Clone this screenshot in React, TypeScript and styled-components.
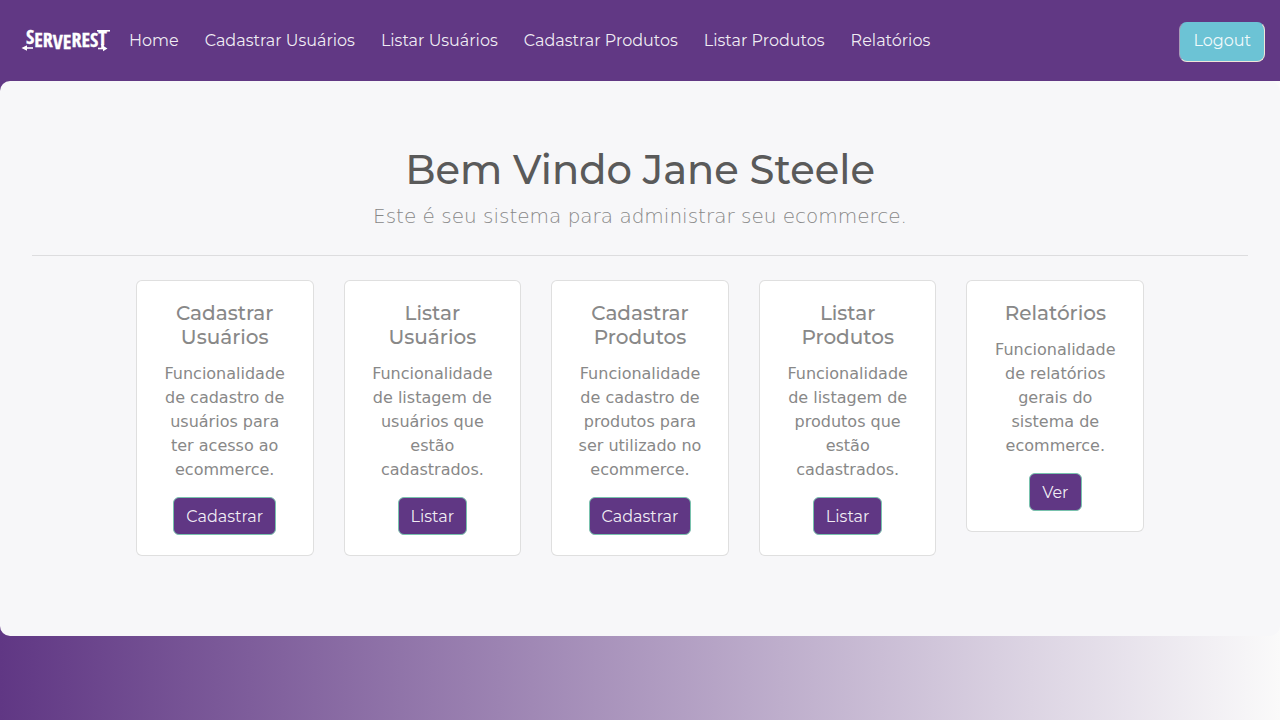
import React from "react";
import styled, { createGlobalStyle } from "styled-components";

const heading = `"Montserrat", "Open Sans", sans-serif`;
const body = `"DejaVu Sans", sans-serif`;

const GlobalStyle = createGlobalStyle`
  *, *::before, *::after { box-sizing: border-box; }
  body {
    margin: 0;
    min-height: 100vh;
    color: #888;
    font-family: ${body};
    font-size: 16px;
    line-height: 24px;
    background: linear-gradient(to right, #603784, #fafafa) fixed;
  }
`;

const Navbar = styled.nav`
  display: flex;
  align-items: center;
  min-height: 81px;
  padding: 2px 15px 0 20px;
  background: #613884;
  font-family: ${heading};
`;

const Brand = styled.a`
  display: block;
  margin-right: 6px;
  svg { display: block; overflow: visible; }
`;

const NavList = styled.ul`
  display: flex;
  flex-wrap: wrap;
  flex: 1;
  margin: 0;
  padding: 0;
  list-style: none;
`;

const NavLink = styled.a`
  display: block;
  padding: 7px 13px 9px;
  color: rgba(255, 255, 255, 0.92);
  text-decoration: none;
`;

const LogoutButton = styled.button`
  padding: 6px 13px 8px;
  border: 1px solid;
  border-color: #6cc3d5 #f0e6d8 #f0e6d8 #a79bb8;
  border-radius: 8px;
  background: #6cc3d5;
  color: rgba(255, 255, 255, 0.92);
  font: 400 16px/24px ${heading};
  cursor: pointer;
`;

const Jumbotron = styled.main`
  padding: 65px 32px 80px;
  border-radius: 10px;
  background: #f7f7f9;
  text-align: center;
`;

const Title = styled.h1`
  margin: 0 0 7px;
  color: #5a5a5a;
  font: 500 40px/48px ${heading};
`;

const Lead = styled.p`
  margin: 0;
  font-size: 20px;
  font-weight: 300;
  line-height: 30px;
`;

const Divider = styled.hr`
  margin: 24px 0;
  border: 0;
  border-top: 1px solid rgba(0, 0, 0, 0.1);
`;

const CardRow = styled.div`
  display: flex;
  flex-wrap: wrap;
  justify-content: center;
  align-items: flex-start;
  margin: 0 -15px;
`;

const Column = styled.div`
  flex: 0 0 calc(100% / 6);
  padding: 0 15px;
`;

const Card = styled.section`
  padding: 20px;
  border: 1px solid rgba(0, 0, 0, 0.125);
  border-radius: 6px;
  background: #fff;
`;

const CardTitle = styled.h2`
  margin: 0 0 13px;
  font: 500 20px/24px ${heading};
`;

const CardText = styled.p`
  margin: 0 0 15px;
`;

const CardLink = styled.a`
  display: inline-block;
  padding: 7px 12px 5px;
  border: 1px solid #78c2ad;
  border-radius: 6px;
  background: #603784;
  color: rgba(255, 255, 255, 0.92);
  font-family: ${heading};
  text-decoration: none;
  vertical-align: middle;
`;

const Logo = () => (
  <svg width="90" height="31" viewBox="0 0 90 31" role="img" aria-label="ServeRest">
    <text
      x="6"
      y="18"
      fill="#fff"
      stroke="#fff"
      strokeWidth="0.3"
      fontFamily='"Open Sans Condensed", "Open Sans", sans-serif'
      fontWeight="700"
      fontSize="20"
    >
      S<tspan dy="3">ER</tspan><tspan dy="2">VE</tspan><tspan dy="-2">RES</tspan><tspan dy="-2">T</tspan>
    </text>
    <g stroke="#fff" strokeWidth="1.6" fill="none">
      <path d="M6 22H13" />
      <path d="M78 22.5H84" />
      <path d="M82.5 18V22" strokeWidth="2.6" />
      <path d="M77 4.8H90" />
    </g>
    <path d="M1.5 22L7 19.2V24.8ZM87.5 22.5L83 19.8V25.2Z" fill="#fff" />
  </svg>
);

const links = [
  "Home",
  "Cadastrar Usuários",
  "Listar Usuários",
  "Cadastrar Produtos",
  "Listar Produtos",
  "Relatórios",
];

const cards = [
  { title: "Cadastrar Usuários", text: "Funcionalidade de cadastro de usuários para ter acesso ao ecommerce.", action: "Cadastrar" },
  { title: "Listar Usuários", text: "Funcionalidade de listagem de usuários que estão cadastrados.", action: "Listar" },
  { title: "Cadastrar Produtos", text: "Funcionalidade de cadastro de produtos para ser utilizado no ecommerce.", action: "Cadastrar" },
  { title: "Listar Produtos", text: "Funcionalidade de listagem de produtos que estão cadastrados.", action: "Listar" },
  { title: "Relatórios", text: "Funcionalidade de relatórios gerais do sistema de ecommerce.", action: "Ver" },
];

export default function App() {
  return (
    <>
      <GlobalStyle />
      <Navbar>
        <Brand href="#home"><Logo /></Brand>
        <NavList>
          {links.map((label) => (
            <li key={label}><NavLink href="#">{label}</NavLink></li>
          ))}
        </NavList>
        <LogoutButton type="button">Logout</LogoutButton>
      </Navbar>
      <Jumbotron>
        <Title>Bem Vindo Jane Steele</Title>
        <Lead>Este é seu sistema para administrar seu ecommerce.</Lead>
        <Divider />
        <CardRow>
          {cards.map((card) => (
            <Column key={card.title}>
              <Card>
                <CardTitle>{card.title}</CardTitle>
                <CardText>{card.text}</CardText>
                <CardLink href="#">{card.action}</CardLink>
              </Card>
            </Column>
          ))}
        </CardRow>
      </Jumbotron>
    </>
  );
}
